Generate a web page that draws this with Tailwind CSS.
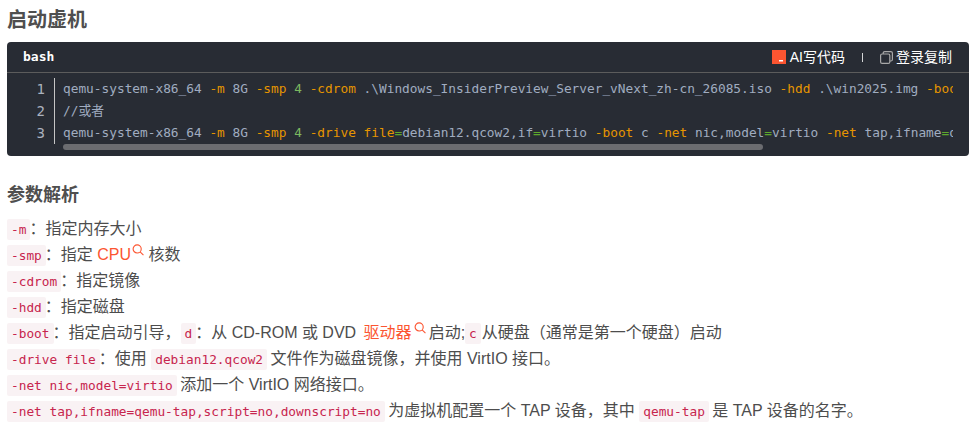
<!DOCTYPE html>
<html lang="zh-CN">
<head>
    <meta charset="UTF-8">
    <title>启动虚机</title>
    <script src="https://cdn.jsdelivr.net/npm/@tailwindcss/browser@4"></script>
</head>
<body class="bg-white text-[#4d4d4d] font-['Liberation_Sans','Noto_Sans_CJK_SC',sans-serif] overflow-hidden">

<main class="w-[974px] h-[446px] pl-[7px] pr-[5px] pt-[7px]">
    <h2 class="text-[20px] leading-[26px] font-bold text-[#4f4f4f] mb-[9px]">启动虚机</h2>

    <div class="relative h-[114px] rounded-[4px] bg-[#282c34] overflow-hidden">
        <div class="h-[30px] border-b border-[#5c5c5c] flex items-center pl-[16px] pr-[17px] box-content">
            <span class="text-[13px] font-bold text-white font-['DejaVu_Sans_Mono',monospace]">bash</span>
            <span class="ml-auto flex items-center text-white text-[14px]">
                <svg class="w-[14px] h-[14px] mr-[4px]" viewBox="0 0 14 14"><rect width="14" height="14" fill="#fc5531"/><rect x="7" y="10" width="4" height="1.5" fill="#fff"/></svg>
                AI写代码
                <span class="w-px h-[9px] bg-white/80 ml-[17px] mr-[17px]"></span>
                <svg class="w-[13px] h-[13px] mr-[3px]" viewBox="0 0 13 13" fill="none" stroke="#a8a8a8" stroke-width="1.2"><rect x="0.6" y="3" width="9.2" height="9.4" rx="1.5"/><path d="M3.2 3V2.100a1.500 1.500 0 0 1 1.500-1.500h6.200a1.500 1.500 0 0 1 1.500 1.500v6.400a1.500 1.500 0 0 1-1.500 1.500H9.800"/></svg>
                登录复制
            </span>
        </div>
        <div class="flex mt-[5px] ml-[16px] mr-[16px] font-['DejaVu_Sans_Mono','Noto_Sans_CJK_SC',monospace] text-[12.8px] leading-[22px]">
            <div class="w-[32px] shrink-0 pr-[9px] text-right text-[#abb2bf] border-r border-[#c5c5c5]">
                <div class="text-[14px]">1</div>
                <div class="text-[14px]">2</div>
                <div class="text-[14px]">3</div>
            </div>
            <div class="pl-[8px] text-[#a0acc0] overflow-hidden">
                <div class="whitespace-pre">qemu-system-x86_64 <span class="text-[#e69500]">-m</span> 8G <span class="text-[#e69500]">-smp</span> <span class="text-[#7cb860]">4</span> <span class="text-[#e69500]">-cdrom</span> .\Windows_InsiderPreview_Server_vNext_zh-cn_26085.iso <span class="text-[#e69500]">-hdd</span> .\win2025.img <span class="text-[#e69500]">-boot</span> d</div>
                <div class="whitespace-pre">//或者</div>
                <div class="whitespace-pre">qemu-system-x86_64 <span class="text-[#e69500]">-m</span> 8G <span class="text-[#e69500]">-smp</span> <span class="text-[#7cb860]">4</span> <span class="text-[#e69500]">-drive</span> <span class="text-[#e69500]">file</span><span class="text-[#5fa82c]">=</span>debian12.qcow2,if<span class="text-[#5fa82c]">=</span>virtio <span class="text-[#e69500]">-boot</span> c <span class="text-[#e69500]">-net</span> nic,model<span class="text-[#5fa82c]">=</span>virtio <span class="text-[#e69500]">-net</span> tap,ifname<span class="text-[#5fa82c]">=</span>qemu-tap,script<span class="text-[#5fa82c]">=</span>no</div>
            </div>
        </div>
        <div class="absolute left-[56px] top-[102px] w-[700px] h-[6px] rounded-full bg-[#6b6c70]"></div>
    </div>

    <h3 class="text-[18px] leading-[24px] font-bold text-[#4f4f4f] mt-[27px] mb-[9px]">参数解析</h3>

    <div class="text-[16px] leading-[26px] text-[#4d4d4d]">
        <p class="h-[26px]"><code class="font-['DejaVu_Sans_Mono',monospace] text-[12.8px] text-[#c7254e] bg-[#f9f2f4] rounded-[2px] pl-[4px] pr-[4px] -mr-[1px] py-[3px]">-m</code>：指定内存大小</p>
        <p class="h-[26px]"><code class="font-['DejaVu_Sans_Mono',monospace] text-[12.8px] text-[#c7254e] bg-[#f9f2f4] rounded-[2px] pl-[4px] pr-[4px] -mr-[1px] py-[3px]">-smp</code>：指定 <span class="text-[#fc5531]">CPU<svg class="inline-block w-[12px] h-[12px] align-[4px] ml-[1px]" viewBox="0 0 13 13" fill="none" stroke="#fc5531" stroke-width="1.200"><circle cx="5.600" cy="5.300" r="4.400"/><path d="M8.800 8.500 12.400 12"/></svg></span> 核数</p>
        <p class="h-[26px]"><code class="font-['DejaVu_Sans_Mono',monospace] text-[12.8px] text-[#c7254e] bg-[#f9f2f4] rounded-[2px] pl-[4px] pr-[4px] -mr-[1px] py-[3px]">-cdrom</code>：指定镜像</p>
        <p class="h-[26px]"><code class="font-['DejaVu_Sans_Mono',monospace] text-[12.8px] text-[#c7254e] bg-[#f9f2f4] rounded-[2px] pl-[4px] pr-[4px] -mr-[1px] py-[3px]">-hdd</code>：指定磁盘</p>
        <p class="h-[26px]"><code class="font-['DejaVu_Sans_Mono',monospace] text-[12.8px] text-[#c7254e] bg-[#f9f2f4] rounded-[2px] pl-[4px] pr-[4px] -mr-[1px] py-[3px]">-boot</code>：指定启动引导，<code class="font-['DejaVu_Sans_Mono',monospace] text-[12.8px] text-[#c7254e] bg-[#f9f2f4] rounded-[2px] pl-[4px] pr-[4px] -mr-[1px] py-[3px]">d</code>：从 CD-ROM 或 DVD <span class="text-[#fc5531] ml-[3px]">驱动器<svg class="inline-block w-[12px] h-[12px] align-[4px] ml-[2px] mr-[3px]" viewBox="0 0 13 13" fill="none" stroke="#fc5531" stroke-width="1.200"><circle cx="5.600" cy="5.300" r="4.400"/><path d="M8.800 8.500 12.400 12"/></svg></span>启动;<code class="font-['DejaVu_Sans_Mono',monospace] text-[12.8px] text-[#c7254e] bg-[#f9f2f4] rounded-[2px] pl-[4px] pr-[4px] mr-[1px] py-[3px]">c</code>从硬盘（通常是第一个硬盘）启动</p>
        <p class="h-[26px]"><code class="font-['DejaVu_Sans_Mono',monospace] text-[12.8px] text-[#c7254e] bg-[#f9f2f4] rounded-[2px] pl-[4px] pr-[4px] -mr-[1px] py-[3px]">-drive file</code>：使用 <code class="font-['DejaVu_Sans_Mono',monospace] text-[12.8px] text-[#c7254e] bg-[#f9f2f4] rounded-[2px] pl-[4px] pr-[4px] -mr-[1px] py-[3px]">debian12.qcow2</code> 文件作为磁盘镜像，并使用 VirtIO 接口。</p>
        <p class="h-[26px]"><code class="font-['DejaVu_Sans_Mono',monospace] text-[12.8px] text-[#c7254e] bg-[#f9f2f4] rounded-[2px] pl-[4px] pr-[4px] -mr-[1px] py-[3px]">-net nic,model=virtio</code> 添加一个 VirtIO 网络接口。</p>
        <p class="h-[26px]"><code class="font-['DejaVu_Sans_Mono',monospace] text-[12.8px] text-[#c7254e] bg-[#f9f2f4] rounded-[2px] pl-[4px] pr-[4px] -mr-[1px] py-[3px]">-net tap,ifname=qemu-tap,script=no,downscript=no</code> 为虚拟机配置一个 TAP 设备，其中 <code class="font-['DejaVu_Sans_Mono',monospace] text-[12.8px] text-[#c7254e] bg-[#f9f2f4] rounded-[2px] pl-[4px] pr-[4px] -mr-[1px] py-[3px]">qemu-tap</code> 是 TAP 设备的名字。</p>
    </div>
</main>

</body>
</html>
